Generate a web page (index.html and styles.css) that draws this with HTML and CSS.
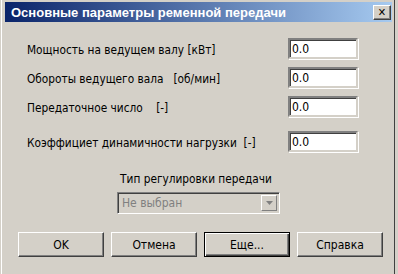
FILE: index.html
```html
<!DOCTYPE html>
<html lang="ru">
<head>
    <meta charset="UTF-8">
    <title>Основные параметры ременной передачи</title>
    <link rel="stylesheet" href="styles.css">
</head>
<body>
    <div class="window">
        <div class="titlebar">
            <span class="title">Основные параметры ременной передачи</span>
            <span class="close">&#x2715;</span>
        </div>

        <div class="params">
            <div class="row">
                <span class="label">Мощность на ведущем валу [кВт]</span>
                <span class="field">0.0</span>
            </div>
            <div class="row">
                <span class="label">Обороты ведущего вала&nbsp;&nbsp; [об/мин]</span>
                <span class="field">0.0</span>
            </div>
            <div class="row">
                <span class="label">Передаточное число&nbsp;&nbsp;&nbsp; [-]</span>
                <span class="field">0.0</span>
            </div>
            <div class="row last">
                <span class="label">Коэффициет динамичности нагрузки&nbsp; [-]</span>
                <span class="field">0.0</span>
            </div>
        </div>

        <div class="regulation">
            <div class="caption">Тип регулировки передачи</div>
            <div class="combo">
                <span class="combo-text">Не выбран</span>
                <span class="combo-arrow">
                    <svg width="7" height="4" viewBox="0 0 7 4"><path d="M0 0h7L3.5 4z" fill="#808080"/></svg>
                </span>
            </div>
        </div>

        <div class="buttons">
            <span class="button">OK</span>
            <span class="button">Отмена</span>
            <span class="button default">Еще...</span>
            <span class="button">Справка</span>
        </div>
    </div>
</body>
</html>
```

FILE: styles.css
```css
body {
    margin: 0;
    background: #d4d0c8;
    font-family: "DejaVu Sans Condensed", "Liberation Sans", sans-serif;
    font-size: 11.75px;
    color: #000;
}
.window {
    width: 394px;
    height: 274px;
    box-sizing: border-box;
    padding: 2px 2px 0 3px;
    border-left: 1px solid #fff;
    border-right: 1px solid #404040;
    margin-left: 1px;
}
.titlebar {
    height: 20px;
    display: flex;
    align-items: center;
    justify-content: space-between;
    padding: 0 1px 0 6px;
    background: linear-gradient(to right, #0a246a, #a6caf0);
}
.title {
    color: #fff;
    font-family: "Liberation Sans", sans-serif;
    font-weight: bold;
    font-size: 13px;
}
.close {
    width: 18px;
    height: 15px;
    box-sizing: border-box;
    display: flex;
    align-items: center;
    justify-content: center;
    background: #d4d0c8;
    border: 1px solid;
    border-color: #fff #404040 #404040 #fff;
    box-shadow: inset -1px -1px 0 #808080;
    font-size: 11px;
    font-weight: bold;
}
.params {
    padding: 15px 0 0 22px;
}
.row {
    display: flex;
    align-items: center;
    height: 22px;
    margin-bottom: 7px;
}
.row .label {
    padding-top: 3px;
}
.row.last {
    margin-top: 13px;
}
.label {
    width: 261px;
}
.field {
    width: 70px;
    height: 21px;
    box-sizing: border-box;
    background: #fff;
    border: 2px solid;
    border-color: #808080 #d4d0c8 #d4d0c8 #808080;
    box-shadow: inset 1px 1px 0 #404040, 1px 1px 0 #fff;
    padding: 2px 2px 0 2px;
    font-size: 12px;
}
.regulation {
    display: flex;
    flex-direction: column;
    align-items: center;
    margin-top: 20px;
}
.caption {
    margin-bottom: 6px;
    margin-right: 5px;
}
.combo {
    width: 163px;
    height: 22px;
    box-sizing: border-box;
    display: flex;
    justify-content: space-between;
    background: #d4d0c8;
    border: 1px solid;
    border-color: #808080 #fff #fff #808080;
    box-shadow: inset 1px 1px 0 #404040;
    padding: 2px;
}
.combo-text {
    color: #808080;
    padding-left: 2px;
    line-height: 16px;
    font-size: 12px;
}
.combo-arrow {
    width: 16px;
    height: 16px;
    box-sizing: border-box;
    display: flex;
    align-items: center;
    justify-content: center;
    border: 1px solid;
    border-color: #fff #808080 #808080 #fff;
}
.buttons {
    display: flex;
    gap: 7px;
    padding: 18px 0 0 13px;
}
.button {
    width: 86px;
    height: 25px;
    box-sizing: border-box;
    display: flex;
    align-items: center;
    justify-content: center;
    border: 1px solid;
    border-color: #fff #404040 #404040 #fff;
    box-shadow: inset -1px -1px 0 #808080;
    font-size: 12px;
}
.button.default {
    border: 1px solid #000;
    box-shadow: inset 1px 1px 0 #fff, inset -1px -1px 0 #404040, inset -2px -2px 0 #808080;
}
```
